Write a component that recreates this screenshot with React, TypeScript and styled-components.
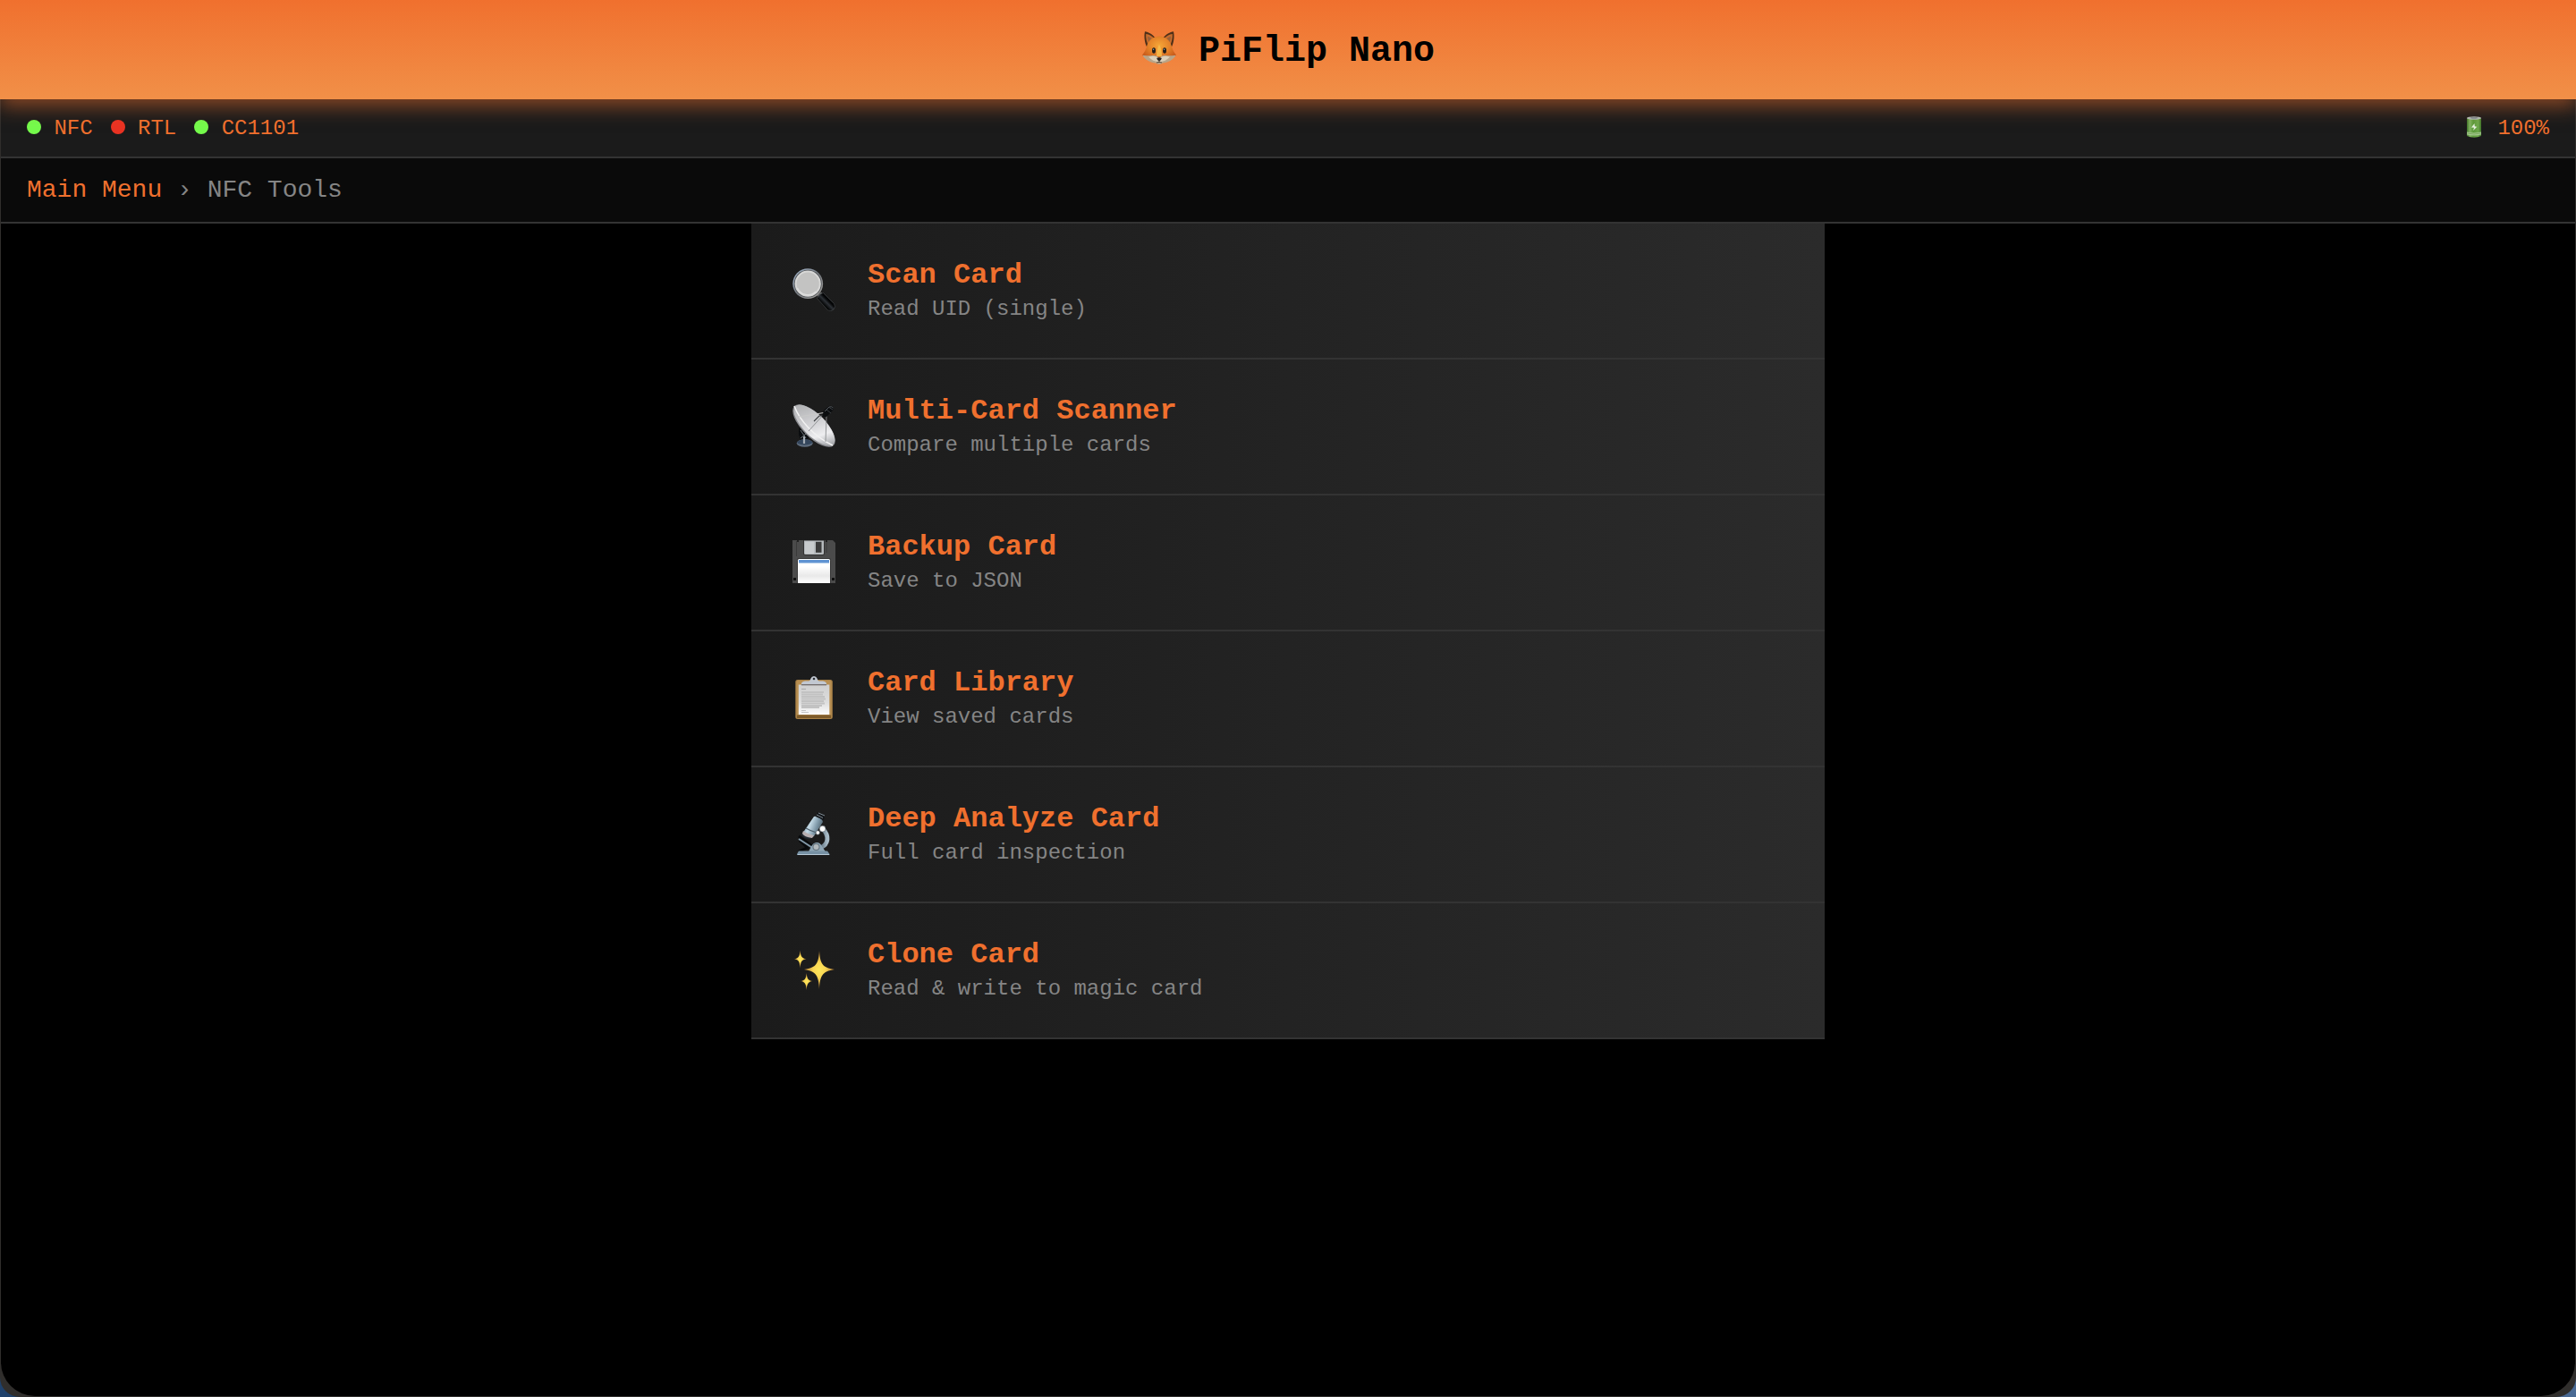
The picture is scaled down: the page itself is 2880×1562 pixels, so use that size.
import React from "react";
import styled, { createGlobalStyle } from "styled-components";

const color = {
  orange: "#f0702e",
  orangeLight: "#f19048",
  line: "#333333",
  muted: "#858585",
  green: "#75fb4c",
  red: "#ea3323",
};

const GlobalStyle = createGlobalStyle`
  *, *::before, *::after { box-sizing: border-box; }
  body {
    margin: 0;
    background: linear-gradient(90deg, #1f416b, #4a6a94);
    font-family: "Liberation Mono", "Courier New", monospace;
  }
`;

const Shell = styled.div`
  display: flex;
  flex-direction: column;
  min-height: 100vh;
  overflow: hidden;
  background: #302e2c;
  border-radius: 0 0 22px 22px;
`;

const Header = styled.header`
  position: relative;
  z-index: 1;
  padding: 35px 30px 31px;
  background: linear-gradient(180deg, ${color.orange}, ${color.orangeLight});
  box-shadow: 0 8px 20px rgba(240, 112, 46, 0.5);
`;

const Title = styled.h1`
  display: flex;
  justify-content: center;
  align-items: flex-start;
  gap: 24px;
  margin: 0;
  font-size: 40px;
  line-height: 45px;
  font-weight: 700;
  color: #000;
`;

const Screen = styled.div`
  flex: 1;
  margin: 0 1px 1px;
  overflow: hidden;
  background: #000;
  border-radius: 0 0 38px 38px;
`;

const StatusBar = styled.div`
  display: flex;
  justify-content: space-between;
  align-items: flex-start;
  padding: 19px 29px 17px;
  background: #1b1b1b;
  border-bottom: 2px solid ${color.line};
  font-size: 24px;
  line-height: 28px;
  color: ${color.orange};
`;

const StatusGroup = styled.div<{ $gap: number }>`
  display: flex;
  align-items: flex-start;
  gap: ${(p) => p.$gap}px;
`;

const Dot = styled.span<{ $on: boolean }>`
  display: inline-block;
  width: 16px;
  height: 16px;
  border-radius: 50%;
  background: ${(p) => (p.$on ? color.green : color.red)};
`;

const Breadcrumb = styled.nav`
  padding: 20px 29px;
  background: #0a0a0a;
  border-bottom: 2px solid ${color.line};
  font-size: 28px;
  line-height: 31px;
  color: ${color.muted};
`;

const CrumbLink = styled.a`
  color: ${color.orange};
  text-decoration: none;
`;

const Menu = styled.main`
  max-width: 1200px;
  margin: 0 auto;
`;

const MenuItem = styled.button`
  display: flex;
  align-items: center;
  gap: 30px;
  width: 100%;
  padding: 40px;
  border: 0;
  border-bottom: 2px solid ${color.line};
  background: linear-gradient(90deg, #1b1b1b, #2b2b2b);
  font-family: inherit;
  text-align: left;
  cursor: pointer;
`;

const IconBox = styled.span`
  display: flex;
  justify-content: center;
  width: 60px;
  padding-bottom: 3px;
`;

const ItemText = styled.span`
  display: flex;
  flex-direction: column;
  gap: 6px;
`;

const ItemTitle = styled.span`
  font-size: 32px;
  line-height: 36px;
  font-weight: 700;
  color: ${color.orange};
`;

const ItemDescription = styled.span`
  font-size: 24px;
  line-height: 28px;
  color: ${color.muted};
`;

const FoxIcon = () => (
  <svg width="40" height="40" viewBox="0 1 40 40" aria-hidden="true">
    <defs>
      <radialGradient id="foxFace" cx="0.5" cy="0.35" r="0.6">
        <stop offset="0" stopColor="#f5a638" />
        <stop offset="0.5" stopColor="#e58329" />
        <stop offset="1" stopColor="#c4561a" />
      </radialGradient>
    </defs>
    <path d="M4 1.200C2.600 7 4 15 6.500 19L16 9C12.500 4 8 2 4 1.200z" fill="#4f3018" />
    <path d="M36 1.200C37.400 7 36 15 33.500 19L24 9C27.500 4 32 2 36 1.200z" fill="#4f3018" />
    <path d="M5.200 4C5 9 6 13 8 17L15.500 10C12 6 9 4.500 5.200 4z" fill="#c86c2c" />
    <path d="M34.800 4C35 9 34 13 32 17L24.500 10C28 6 31 4.500 34.800 4z" fill="#c86c2c" />
    <path d="M7 6.500C7 10 8 13 9.500 15L13 11C11 8.500 9 7.200 7 6.500zM33 6.500C33 10 32 13 30.500 15L27 11C29 8.500 31 7.200 33 6.500z" fill="#9a6038" />
    <path d="M20 6.500C27 6.500 32.500 11.500 34 18C34.800 21.500 36.500 24.500 39 27.500C35 31.500 29 34 20 36C11 34 5 31.500 1 27.500C3.500 24.500 5.200 21.500 6 18C7.500 11.500 13 6.500 20 6.500z" fill="url(#foxFace)" />
    <path d="M20 16C18 19 17 24 17 29H23C23 24 22 19 20 16z" fill="#f8c250" opacity="0.8" />
    <path d="M1.500 27.700C7 29 12 27 17 28.500L20 31L23 28.500C28 27 33 29 38.500 27.700C36 33 29 36 24 36.500Q20 39 16 36.500C11 36 4 33 1.500 27.700z" fill="#b8a488" />
    <path d="M8 29.500C12 29 14 28.300 17 29.500L20 32L23 29.500C26 28.300 28 29 32 29.500C29 33 25 35 20 35.500C15 35 11 33 8 29.500z" fill="#dccfb8" />
    <ellipse cx="14" cy="22.500" rx="2" ry="3.200" fill="#231d18" />
    <ellipse cx="26" cy="22.500" rx="2" ry="3.200" fill="#231d18" />
    <circle cx="13.600" cy="21.300" r="0.800" fill="#8fa0aa" />
    <circle cx="25.600" cy="21.300" r="0.800" fill="#8fa0aa" />
    <path d="M17.200 31Q20 29.500 22.800 31Q22.500 33.500 20 34.500Q17.500 33.500 17.200 31z" fill="#2b2420" />
    <path d="M20 34v1.500M17 36Q20 34.800 23 36" fill="none" stroke="#4b3c30" strokeWidth="0.900" />
  </svg>
);

const BatteryIcon = () => (
  <svg width="24" height="24" viewBox="0 0 24 24" aria-hidden="true">
    <defs>
      <linearGradient id="cell">
        <stop offset="0" stopColor="#3e7228" />
        <stop offset="0.200" stopColor="#82b562" />
        <stop offset="0.450" stopColor="#5c9a3b" />
        <stop offset="0.800" stopColor="#6fa94c" />
        <stop offset="1" stopColor="#3e7228" />
      </linearGradient>
    </defs>
    <path d="M4 2V22Q12 25.500 20 22V2z" fill="url(#cell)" />
    <path d="M4 17.500Q12 19.500 20 17.500V20.500Q12 22.500 4 20.500z" fill="#a5c890" />
    <path d="M4 19Q12 21 20 19" fill="none" stroke="#6a9d4c" strokeWidth="0.700" />
    <ellipse cx="12" cy="2" rx="8" ry="1.800" fill="#adb9b4" />
    <ellipse cx="12" cy="1.800" rx="4" ry="1" fill="#7d8a91" />
    <path d="M12.500 8L9 12.500L12 12.800L11 16L15.300 11.800L12.800 11.300z" fill="#e4efdc" />
  </svg>
);

const MagnifierIcon = () => (
  <svg width="48" height="48" viewBox="0 0 48 48" aria-hidden="true">
    <defs>
      <linearGradient id="rim" x1="0" y1="0" x2="1" y2="1">
        <stop offset="0" stopColor="#a9bdd4" />
        <stop offset="0.500" stopColor="#75797f" />
        <stop offset="1" stopColor="#a7a5a0" />
      </linearGradient>
      <linearGradient id="grip" x1="0" y1="1" x2="1" y2="0">
        <stop offset="0.350" stopColor="#020303" />
        <stop offset="0.500" stopColor="#2c3035" />
        <stop offset="0.600" stopColor="#050607" />
      </linearGradient>
    </defs>
    <path d="M28 31L32 27L35 30L31 34z" fill="#9a9b9c" />
    <path d="M27.500 33.500Q29 28.500 34.500 27.500L46.500 39.500Q49 43 46 46Q43 49 39.500 46.800z" fill="url(#grip)" stroke="#55585a" strokeWidth="0.500" />
    <circle cx="17.200" cy="17.200" r="16.900" fill="url(#rim)" />
    <circle cx="17.200" cy="17.200" r="15.400" fill="#4d5053" />
    <circle cx="17.200" cy="17.200" r="14.600" fill="#d8d8d7" />
    <circle cx="17.200" cy="17.200" r="12.600" fill="#c3c3c2" />
    <path d="M5.500 22A12.600 12.600 0 0 0 26 26" fill="none" stroke="#dededd" strokeWidth="1.200" />
  </svg>
);

const DishIcon = () => (
  <svg width="48" height="48" viewBox="0 0 48 48" aria-hidden="true">
    <defs>
      <linearGradient id="dish" x1="0" y1="0.300" x2="1" y2="0.500">
        <stop offset="0" stopColor="#aeafb1" />
        <stop offset="0.500" stopColor="#d4d4d7" />
        <stop offset="0.750" stopColor="#eeeef0" />
        <stop offset="1" stopColor="#a4a6aa" />
      </linearGradient>
    </defs>
    <path d="M7 26L18 36L17 42H10L7 34z" fill="#0b0d0f" />
    <path d="M9 29L15 38M15 33L9 38" stroke="#6c7378" strokeWidth="1" />
    <ellipse cx="13.700" cy="43.500" rx="9" ry="4.300" fill="#5d6b7c" />
    <ellipse cx="13.700" cy="42.500" rx="8.500" ry="3" fill="#34465c" />
    <path d="M13 36V44" stroke="#a4acb4" strokeWidth="2.200" />
    <ellipse cx="24" cy="24" rx="31" ry="13" transform="rotate(45 24 24)" fill="#8b8c90" />
    <ellipse cx="24.500" cy="23.500" rx="30" ry="12.200" transform="rotate(45 24.500 23.500)" fill="url(#dish)" />
    <path d="M2 2C8 18 24 36 45 46" fill="none" stroke="#f2f2f2" strokeWidth="1.500" />
    <path d="M36 10L18 30M38 13L37 42" fill="none" stroke="#8b8d90" strokeWidth="0.900" />
    <path d="M7 14L35 9.500" stroke="#c9c9c9" strokeWidth="1" />
    <path d="M24 19L27 16L30 13L37 12" fill="none" stroke="#3a3c3f" strokeWidth="1.100" />
    <path d="M33 14L35 7L41 2Q45 1 46 4L45 7L38 14z" fill="#0b0d0f" />
    <path d="M36 8L41 3Q44 2 45.500 4" fill="none" stroke="#5c6165" strokeWidth="0.900" />
    <path d="M38 6L43 10M41 3.500L45 6" stroke="#3c4145" strokeWidth="1" />
  </svg>
);

const FloppyIcon = () => (
  <svg width="48" height="48" viewBox="0 0 48 48" aria-hidden="true">
    <defs>
      <linearGradient id="label" x1="0" y1="0" x2="0" y2="1">
        <stop offset="0.300" stopColor="#ffffff" />
        <stop offset="0.700" stopColor="#e9e9e9" />
        <stop offset="1" stopColor="#ffffff" />
      </linearGradient>
    </defs>
    <path d="M0 0H45L48 3V48H0z" fill="#4b4b4b" />
    <path d="M4.500 1V18M38 1V14" stroke="#3a3a3a" strokeWidth="1" />
    <path d="M12 0H36V15Q36 17 34 17H14Q12 17 12 15z" fill="#343434" />
    <path d="M13 0.500H35V14.500Q35 16 33.500 16H14.500Q13 16 13 14.500z" fill="#b6babd" />
    <path d="M14 1.500H24V15H14z" fill="#c8cbcd" />
    <rect x="26" y="1.800" width="6.500" height="12" fill="#3a3a3a" />
    <path d="M5 48V22Q5 20 7 20H41Q43 20 43 22V48z" fill="#383838" />
    <path d="M6 48V22.500Q6 21 7.500 21H40.500Q42 21 42 22.500V48z" fill="url(#label)" />
    <rect x="7" y="22" width="34" height="3.500" fill="#5f93d2" />
    <rect x="1" y="42" width="3" height="3" fill="#101010" />
    <rect x="44" y="42" width="3" height="3" fill="#101010" />
    <circle cx="6" cy="1" r="1" fill="#151515" />
    <circle cx="38" cy="1" r="1" fill="#151515" />
  </svg>
);

const ClipboardIcon = () => (
  <svg width="48" height="48" viewBox="0 0 48 48" aria-hidden="true">
    <defs>
      <linearGradient id="paper" x1="0" y1="0" x2="0" y2="1">
        <stop offset="0" stopColor="#cfcfcf" />
        <stop offset="0.600" stopColor="#dedede" />
        <stop offset="1" stopColor="#fdfdfd" />
      </linearGradient>
    </defs>
    <rect x="3.300" y="4" width="41.500" height="44" rx="2.500" fill="#a98146" />
    <rect x="4.500" y="5" width="39" height="40" rx="2" fill="#b88f52" />
    <rect x="5" y="43.500" width="38" height="3.500" fill="#7e5c2b" />
    <rect x="6.800" y="9.500" width="34.500" height="33.500" fill="url(#paper)" />
    <path d="M10 14.500h5" stroke="#acacac" strokeWidth="1.200" />
    <path d="M10 18h25M10 20.500h24M10 23h26M10 25.500h27M10 28h25M10 30.500h26M10 33h23M10 35h20" stroke="#c2c2c2" strokeWidth="1.800" />
    <path d="M10 38.500h5M10 40.500h8" stroke="#c6c6c6" strokeWidth="1" />
    <path d="M10 9.500V8Q11 5.500 14 5.500H18Q20 5 20.500 2.500Q21.500 0 24 0Q26.500 0 27.500 2.500Q28 5 30 5.500H34Q37 5.500 38 8V9.500z" fill="#c2c8d1" />
    <path d="M10 9.700h28" stroke="#6b6666" strokeWidth="1.200" />
    <circle cx="24" cy="3" r="1.300" fill="#2b2e33" />
  </svg>
);

const MicroscopeIcon = () => (
  <svg width="48" height="48" viewBox="0 0 48 48" aria-hidden="true">
    <defs>
      <linearGradient id="tube" x1="0" y1="0.300" x2="1" y2="0.700">
        <stop offset="0" stopColor="#6e8595" />
        <stop offset="0.350" stopColor="#c5dbe7" />
        <stop offset="0.650" stopColor="#7e98a8" />
        <stop offset="1" stopColor="#3d4d58" />
      </linearGradient>
      <linearGradient id="arm">
        <stop offset="0" stopColor="#5a6d7a" />
        <stop offset="1" stopColor="#a9bcc8" />
      </linearGradient>
    </defs>
    <path d="M34 19C41 26 41 36 31 40" fill="none" stroke="url(#arm)" strokeWidth="5" />
    <path d="M7 27L22 38M8 32L18 41M7 44L16 40" stroke="#080a0c" strokeWidth="3" />
    <path d="M7 30L24 41" stroke="#8197a6" strokeWidth="2" />
    <path d="M17 45C20 43 21 34 27 34C33 34 34 42 38 45z" fill="#8fa6b5" />
    <circle cx="26.500" cy="39" r="4" fill="#62717b" />
    <circle cx="26.500" cy="39" r="3" fill="#b3b9bc" />
    <path d="M7 43.500H39L41.500 47V48H5V47z" fill="#7791a4" />
    <path d="M6 47.500H41" stroke="#b6c9d6" strokeWidth="1" />
    <path d="M11 24L24 5Q26 4 31 7Q34 9 34 11L24 27Q21 30 15 28Q10 26 11 24z" fill="url(#tube)" />
    <path d="M11 23Q15 28 23 28L20 30Q12 30 10 25z" fill="#222a31" />
    <path d="M12 21Q16 24 24 26L22 29Q13 28 11 24z" fill="#b8afb0" />
    <path d="M15 18Q20 21 27 23" stroke="#4c5d69" strokeWidth="1.200" fill="none" />
    <path d="M26 5L28 0.500L36 4L35 9z" fill="#111417" />
    <path d="M27 3L34 6.500M29 1L36 4" stroke="#8d9aa4" strokeWidth="0.900" />
    <circle cx="33.600" cy="18.700" r="3.400" fill="#fff" stroke="#4d5962" strokeWidth="0.600" />
    <circle cx="28.300" cy="23" r="2.200" fill="#fff" stroke="#4d5962" strokeWidth="0.600" />
  </svg>
);

const SparklesIcon = () => (
  <svg width="48" height="48" viewBox="0 0 48 48" aria-hidden="true">
    <defs>
      <radialGradient id="spark">
        <stop offset="0" stopColor="#fde75c" />
        <stop offset="0.400" stopColor="#f9d653" />
        <stop offset="1" stopColor="#b07a34" />
      </radialGradient>
    </defs>
    <g fill="url(#spark)">
      <path d="M30 3C31 17 33 22 47 24C33 26 31 31 30 46C29 31 27 26 13 24C27 22 29 17 30 3z" />
      <path d="M8.600 2.500C9.200 9 10 11.500 15.500 12.300C10 13.100 9.200 15.500 8.600 22.500C8 15.500 7.200 13.100 2 12.300C7.200 11.500 8 9 8.600 2.500z" />
      <path d="M15.700 28C16.300 34 17.200 36.200 22.500 37C17.200 37.800 16.300 40 15.700 47C15.100 40 14.200 37.800 9 37C14.200 36.200 15.100 34 15.700 28z" />
    </g>
  </svg>
);

const devices = [
  { name: "NFC", on: true },
  { name: "RTL", on: false },
  { name: "CC1101", on: true },
];

const tools = [
  { Icon: MagnifierIcon, title: "Scan Card", description: "Read UID (single)" },
  { Icon: DishIcon, title: "Multi-Card Scanner", description: "Compare multiple cards" },
  { Icon: FloppyIcon, title: "Backup Card", description: "Save to JSON" },
  { Icon: ClipboardIcon, title: "Card Library", description: "View saved cards" },
  { Icon: MicroscopeIcon, title: "Deep Analyze Card", description: "Full card inspection" },
  { Icon: SparklesIcon, title: "Clone Card", description: "Read & write to magic card" },
];

export default function App() {
  return (
    <>
      <GlobalStyle />
      <Shell>
        <Header>
          <Title>
            <FoxIcon />
            PiFlip Nano
          </Title>
        </Header>
        <Screen>
          <StatusBar>
            <StatusGroup $gap={20}>
              {devices.map((d) => (
                <span key={d.name}>
                  <Dot $on={d.on} /> {d.name}
                </span>
              ))}
            </StatusGroup>
            <StatusGroup $gap={14}>
              <BatteryIcon />
              100%
            </StatusGroup>
          </StatusBar>
          <Breadcrumb aria-label="Breadcrumb">
            <CrumbLink href="#main">Main Menu</CrumbLink> › <span>NFC Tools</span>
          </Breadcrumb>
          <Menu>
            {tools.map(({ Icon, title, description }) => (
              <MenuItem key={title} type="button">
                <IconBox>
                  <Icon />
                </IconBox>
                <ItemText>
                  <ItemTitle>{title}</ItemTitle>
                  <ItemDescription>{description}</ItemDescription>
                </ItemText>
              </MenuItem>
            ))}
          </Menu>
        </Screen>
      </Shell>
    </>
  );
}
